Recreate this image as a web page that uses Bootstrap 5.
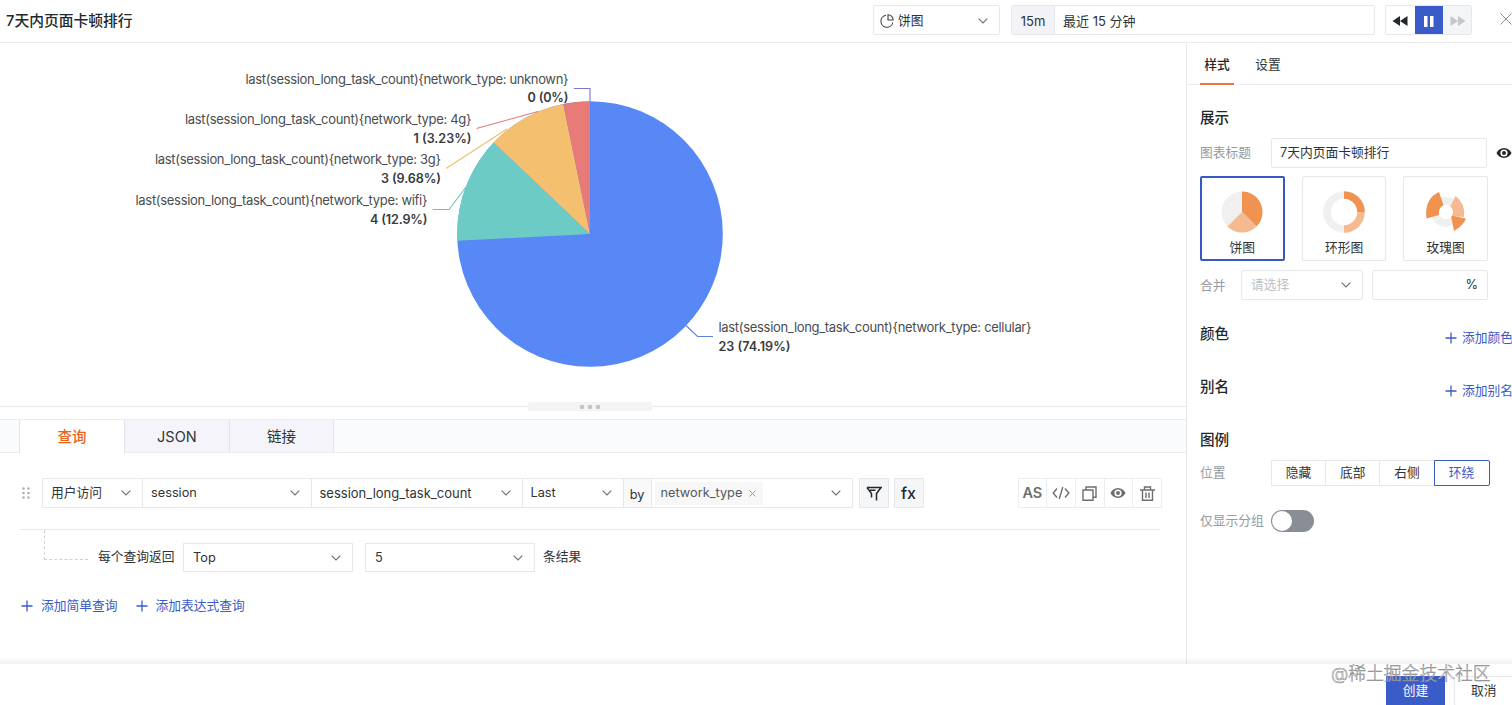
<!DOCTYPE html>
<html lang="zh-CN">
<head>
<meta charset="utf-8">
<meta name="viewport" content="width=device-width, initial-scale=1">
<title>7天内页面卡顿排行</title>
<link href="https://cdn.jsdelivr.net/npm/bootstrap@5.3.0/dist/css/bootstrap.min.css" rel="stylesheet">
<style>
:root{--line:#e6e8eb;--blue:#3a5ac8;--ink:#2f3437;--muted:#969b9f}
body{font-family:Inter,"Noto Sans CJK SC",sans-serif;font-size:12.75px;line-height:18px;color:var(--ink);height:705px;overflow:hidden;background:#fff}
svg{display:block;flex:none}
.topbar{height:43px;border-bottom:1px solid #ebebed;flex:none}
.page-title{font-size:14.75px;margin:12px 0 0 6px;width:868px;flex:none;color:#24292c}
.page-title,.sec-title,.side-tabs .on,.tab-item.on{font-weight:500}
.box{border:1px solid var(--line);background:#fff;display:flex;align-items:center;flex:none;border-radius:2px}
.sel{justify-content:space-between;height:30px;padding:0 11px 0 9px}
.topbar .box{padding-top:1px}
.chev{width:10px;height:6px;fill:none;stroke:#6d7275;stroke-width:1.2}
.range-tag{width:43px;height:28px;margin-top:-1px;padding-top:1px;background:#f2f2f7;border-right:1px solid var(--line);font-size:13px}
.topbar .player{width:87px;height:30px;overflow:hidden;padding-top:0}
.player>span{width:28.7px;height:30px;padding-top:1px;display:flex;align-items:center;justify-content:center;flex:none}
.workspace{height:621px;flex:none}
.left-pane{width:1186px;flex:none}
.chart{height:359px}
.chart text{font-size:13px;fill:#4a4d50}
.chart .val{font-weight:600;font-size:12.6px;fill:#383b3e}
.splitter{height:9px;background:linear-gradient(#e6e7e8,#e6e7e8) 0 4px/100% 1px no-repeat}
.grip{width:124px;height:9px;margin-left:528px;background:#f4f4f5;border-radius:2px;gap:4px}
.grip i{width:4px;height:4px;background:#c3c4c5;border-radius:1px}
.tabs-strip{height:34px;margin-top:8px;background:#fafbfd;border:solid #ecedf2;border-width:1px 0;padding-left:19px}
.tab-item{width:104.7px;border-right:1px solid #e3e4ea;background:#f4f4fa;display:flex;align-items:center;justify-content:center;font-size:14.5px;padding-top:1px}
.tab-item.on{background:#fff;color:#e8641b;border-left:1px solid #e3e4ea;width:106px;margin-bottom:-1px}
.query-row{margin:25px 0 0 21px;height:30px}
.query-row .box{height:30px;border-radius:0;margin-right:-1px}
.query-row .sel{padding-left:8px}
.chip{background:#f7f7f8;height:23px;padding:0 7px 0 6px;gap:7px;color:#55595c;font-size:12.75px}
.by{background:#f8f9fa;width:29px;justify-content:center;padding-top:3px}
.query-row .sq{width:30px;background:#f4f6f8;justify-content:center;color:#22282c}
.query-row .act{width:29.7px;justify-content:center;color:#6c6e70;border-color:#ecedef;border-radius:0}
.rule{width:1140px;height:1px;background:#e6e8ea;margin:21px 0 0 20px}
.limit-row{margin-left:44px;height:42px;align-items:flex-end}
.limit-row .box{border-radius:0;height:29px}
.elbow{width:44px;height:30px;border:dashed #cfd1d3;border-width:0 0 1px 1px;margin-right:10px;align-self:flex-start}
.links{color:var(--blue);margin:25px 0 0 21px}
.links span{margin-right:18px;gap:8px}
.plus{width:12px;height:12px;stroke:var(--blue);stroke-width:1.3;fill:none}
.side{border-left:1px solid #e7e9eb;width:326px;flex:none;overflow:hidden}
.side-tabs{height:42px;border-bottom:1px solid #ececee;padding-left:13px;gap:17px}
.side-tabs span{width:34px;display:flex;align-items:center;justify-content:center;height:42px;padding-top:2px}
.side-tabs .on{border-bottom:2px solid #ea7440;color:#23282b;padding-top:4px}
.side-body{padding-left:13px;width:340px}
.sec-title{font-size:14.6px;color:#23282b;line-height:20px}
.lbl{color:var(--muted);flex:none}
.opt{width:84.7px;height:85px;flex-direction:column;padding-top:14px}
.opt.on{border:2px solid #3558c4;padding-top:13px}
.opt span{margin-top:7px;line-height:16px}
.seg .box{width:55.2px;height:26px;margin-right:-1px;justify-content:center;border-radius:0}
.seg .box.on{border-color:var(--blue);color:var(--blue);width:56px;border-radius:0 2px 2px 0;z-index:1}
.switch{width:43px;height:22px;border-radius:11px;background:#888d96;padding:1px}
.switch i{width:20px;height:20px;border-radius:50%;background:#fff;display:block}
.shade{height:6px;flex:none;margin-top:-6px;background:linear-gradient(#00000003,#0000000d)}
.bottom{height:41px;flex:none;padding:12px 0 0 1386px;position:relative}
.bottom .ok{width:59px;height:30px;background:#3a5cc9;color:#fff;flex:none;margin-right:9px}
.bottom .box{width:62px;height:30px;padding-left:16px}
.stamp{position:absolute;left:1331px;top:-1px;font-size:17.8px;font-weight:300;line-height:22px;color:#ffffffd0;-webkit-text-stroke:.5px #7f8387;white-space:nowrap}
</style>
</head>
<body class="d-flex flex-column">
<svg width="0" height="0" class="position-absolute"><defs>
<symbol id="chev" viewBox="0 0 10 6"><path d="M.7.7 5 5 9.3.7"/></symbol>
<symbol id="plus" viewBox="0 0 12 12"><path d="M6 .5v11M.5 6h11"/></symbol>
<symbol id="eye" viewBox="0 0 16 12"><path fill-rule="evenodd" d="M8 1C4.500 1 1.800 3.200.500 6 1.800 8.800 4.500 11 8 11s6.200-2.200 7.500-5C14.200 3.200 11.500 1 8 1Zm0 1.400a3.600 3.600 0 1 1 0 7.200 3.600 3.600 0 0 1 0-7.200ZM8 4a2 2 0 1 0 0 4 2 2 0 0 0 0-4Z"/></symbol>
</defs></svg>

<header class="topbar d-flex align-items-start">
  <div class="page-title">7天内页面卡顿排行</div>
  <div class="box sel" style="width:127px;margin:5px 10px 0 -1px;padding-left:6px">
    <span class="d-flex align-items-center" style="gap:4px"><svg width="14" height="14" viewBox="0 0 14 14" fill="none" stroke="#3b4043" stroke-width="1.1"><path d="M6 1.300a6 6 0 1 0 6.800 7.200M8 .8v5.200h5.200A5.200 5.200 0 0 0 8 .8Z"/></svg>饼图</span>
    <svg class="chev"><use href="#chev"/></svg>
  </div>
  <div class="box" style="width:364px;height:30px;margin:5px 0 0 1px">
    <span class="range-tag d-flex align-items-center justify-content-center">15m</span><span class="ms-2" style="font-size:13px">最近 15 分钟</span>
  </div>
  <div class="box player" style="margin:5px 0 0 10px">
    <span><svg width="16" height="10" fill="#22282d"><path d="M8 0v10L.5 5zM15.500 0v10L8 5z"/></svg></span>
    <span style="background:#3a5cc9"><svg width="10" height="12" fill="#fff"><path d="M0 1h3.500v11H0zM6 1h3.500v11H6z"/></svg></span>
    <span style="background:#f4f5f6"><svg width="16" height="10" fill="#c4c6c8"><path d="M.5 0v10L8 5zM8 0v10l7.500-5z"/></svg></span>
  </div>
  <svg width="12" height="12" style="margin:13px 0 0 28px" stroke="#8c9093" fill="none"><path d="m.5.500 11 11m0-11-11 11"/></svg>
</header>

<main class="workspace d-flex">
  <section class="left-pane">
    <svg class="chart" width="1186" height="359" viewBox="0 43 1186 359">
      <circle cx="590" cy="234" r="132.800" fill="#5788f6"/>
      <path fill="#6dcbc6" d="M590 234 457.400 240.700A132.800 132.800 0 0 1 493.700 142.500Z"/>
      <path fill="#f4c06f" d="M590 234 493.700 142.500A132.800 132.800 0 0 1 563.300 103.900Z"/>
      <path fill="#e87b78" d="M590 234 563.300 103.900A132.800 132.800 0 0 1 590 101.200Z"/>
      <g fill="none" stroke-width="1.100">
        <path stroke="#7d78c9" d="M574 88.500h16v12.700"/>
        <path stroke="#e0797c" d="M476.500 128.500 538 111.500"/>
        <path stroke="#f2bb6e" d="M446 168.500 507 129"/>
        <path stroke="#68c5bd" d="M432.500 209.500h16.500L466 187"/>
        <path stroke="#5b82dd" d="m686 325.500 11.500 11h15.500"/>
      </g>
      <g text-anchor="end">
        <text x="568.500" y="83.500" textLength="323">last(session_long_task_count){network_type: unknown}</text><text class="val" x="568.500" y="102.300" textLength="41">0 (0%)</text>
        <text x="471.500" y="123.600" textLength="286.500">last(session_long_task_count){network_type: 4g}</text><text class="val" x="471.500" y="142.700" textLength="58">1 (3.23%)</text>
        <text x="441" y="164.300" textLength="286">last(session_long_task_count){network_type: 3g}</text><text class="val" x="441" y="183.300" textLength="60">3 (9.68%)</text>
        <text x="427.500" y="204.600" textLength="292">last(session_long_task_count){network_type: wifi}</text><text class="val" x="427.500" y="223.600" textLength="57.500">4 (12.9%)</text>
      </g>
      <text x="718.500" y="331.500" textLength="313">last(session_long_task_count){network_type: cellular}</text><text class="val" x="718.500" y="350.500" textLength="72">23 (74.19%)</text>
    </svg>
    <div class="splitter"><div class="grip d-flex align-items-center justify-content-center"><i></i><i></i><i></i></div></div>
    <nav class="tabs-strip d-flex"><div class="tab-item on">查询</div><div class="tab-item">JSON</div><div class="tab-item">链接</div></nav>

    <div class="query-row d-flex align-items-center">
      <svg width="10" height="13" fill="#aeb1b3" style="margin-right:11px"><circle cx="2.500" cy="1.500" r="1.300"/><circle cx="7.500" cy="1.500" r="1.300"/><circle cx="2.500" cy="6" r="1.300"/><circle cx="7.500" cy="6" r="1.300"/><circle cx="2.500" cy="10.500" r="1.300"/><circle cx="7.500" cy="10.500" r="1.300"/></svg>
      <div class="box sel" style="width:101px">用户访问<svg class="chev"><use href="#chev"/></svg></div>
      <div class="box sel" style="width:169.500px">session<svg class="chev"><use href="#chev"/></svg></div>
      <div class="box sel" style="width:212px"><span style="font-size:13px">session_long_task_count</span><svg class="chev"><use href="#chev"/></svg></div>
      <div class="box sel" style="width:102px">Last<svg class="chev"><use href="#chev"/></svg></div>
      <div class="box by">by</div>
      <div class="box sel" style="width:202px;padding-left:3px"><span class="chip d-flex align-items-center">network_type<svg width="7" height="7" stroke="#999c9f" fill="none"><path d="m.5.500 6 6m0-6-6 6"/></svg></span><svg class="chev"><use href="#chev"/></svg></div>
      <div class="box sq" style="margin:0 5px 0 7px"><svg width="16" height="15" fill="none" stroke="currentColor" stroke-width="1.500"><path d="M1 1.500h14L10.500 7.500v7M1 1.500 5.500 7.500v4M4 4.300h5.500"/></svg></div>
      <div class="box sq" style="font-size:16px;font-weight:500">fx</div>
      <div class="d-flex" style="margin-left:95px">
        <div class="box act" style="font-size:14.500px;font-weight:600">AS</div>
        <div class="box act"><svg width="18" height="14" fill="none" stroke="currentColor" stroke-width="1.400"><path d="M5 2.500 1.200 7 5 11.500M13 2.500 16.800 7 13 11.500M10.800 1 7.200 13"/></svg></div>
        <div class="box act"><svg width="15" height="15" fill="none" stroke="currentColor" stroke-width="1.400"><path d="M1 4h10v10.300H1zM4 4V1h10v10.300h-3"/></svg></div>
        <div class="box act"><svg width="16" height="12" fill="currentColor"><use href="#eye"/></svg></div>
        <div class="box act"><svg width="15" height="15" fill="none" stroke="currentColor" stroke-width="1.400"><path d="M0 4h15M4.500 4V1h6v3M2.500 4v10.300h10V4M6 6.500v5.500M9 6.500v5.500"/></svg></div>
      </div>
    </div>
    <div class="rule"></div>
    <div class="limit-row d-flex">
      <div class="elbow"></div><span style="width:85px;margin-bottom:6px">每个查询返回</span>
      <div class="box sel" style="width:170px;margin-right:12px">Top<svg class="chev"><use href="#chev"/></svg></div>
      <div class="box sel" style="width:170px;margin-right:8px">5<svg class="chev"><use href="#chev"/></svg></div>
      <span style="margin-bottom:6px">条结果</span>
    </div>
    <div class="links d-flex"><span class="d-flex align-items-center"><svg class="plus"><use href="#plus"/></svg>添加简单查询</span><span class="d-flex align-items-center"><svg class="plus"><use href="#plus"/></svg>添加表达式查询</span></div>
  </section>

  <aside class="side">
    <div class="side-tabs d-flex"><span class="on">样式</span><span>设置</span></div>
    <div class="side-body">
      <div class="sec-title" style="padding-top:23px">展示</div>
      <div class="d-flex align-items-center" style="margin-top:10px"><span class="lbl" style="width:71px">图表标题</span><div class="box" style="width:216px;height:30px;padding-left:8px">7天内页面卡顿排行</div><svg width="16" height="12" style="margin-left:9px" fill="#23282b"><use href="#eye"/></svg></div>
      <div class="d-flex" style="gap:17px;margin-top:8px">
        <div class="box opt on"><svg width="42" height="42" viewBox="-21 -21 42 42"><circle r="20.500" fill="#f0f0f0"/><path fill="#f09250" d="M0 0V-20.500A20.500 20.500 0 0 1 14.500 14.500Z"/><path fill="#f5ba90" d="M0 0 14.500 14.500A20.500 20.500 0 0 1-14.500 14.500Z"/></svg><span>饼图</span></div>
        <div class="box opt"><svg width="42" height="42" viewBox="-21 -21 42 42" fill="none" stroke-width="7.500"><circle r="17" stroke="#f0f0f0"/><path stroke="#f09250" d="M0-17A17 17 0 0 1 17 0"/><path stroke="#f5ba90" d="M17 0A17 17 0 0 1 0 17"/></svg><span>环形图</span></div>
        <div class="box opt"><svg width="42" height="42" viewBox="-21 -21 42 42"><circle r="11" stroke="#f0f0f0" stroke-width="8" fill="none"/><path fill="#f09250" d="M-7-20-2.500-7Q-7-4-7 3L-19.500 6.500Q-22-13-7-20Z"/><path fill="#f5ba90" d="M9.500-16 4-5Q7-2 6 4L18 5Q20-8 9.500-16Z"/><path fill="#f09250" d="M5 3.500 20 6.500Q17 14 8 19Z"/><circle r="7" fill="#fff"/></svg><span>玫瑰图</span></div>
      </div>
      <div class="d-flex align-items-center" style="margin-top:9px"><span class="lbl" style="width:41px;padding-top:2px">合并</span><div class="box sel" style="width:122px;color:#bcc0c3;margin-right:9px">请选择<svg class="chev"><use href="#chev"/></svg></div><div class="box justify-content-end" style="width:116px;height:30px;padding-right:9px">%</div></div>
      <div class="d-flex align-items-start" style="margin-top:24px;height:53px"><span class="sec-title" style="width:245px">颜色</span><span class="d-flex align-items-center flex-shrink-0" style="gap:5px;color:#3a5ac8;margin-top:5px"><svg class="plus"><use href="#plus"/></svg>添加颜色</span></div>
      <div class="d-flex align-items-start" style="height:53px"><span class="sec-title" style="width:245px">别名</span><span class="d-flex align-items-center flex-shrink-0" style="gap:5px;color:#3a5ac8;margin-top:5px"><svg class="plus"><use href="#plus"/></svg>添加别名</span></div>
      <div class="sec-title">图例</div>
      <div class="seg d-flex align-items-center" style="margin-top:10px"><span class="lbl" style="width:71px">位置</span><div class="box">隐藏</div><div class="box">底部</div><div class="box">右侧</div><div class="box on">环绕</div></div>
      <div class="d-flex align-items-center" style="margin-top:24px"><span class="lbl" style="width:71px;white-space:nowrap">仅显示分组</span><div class="switch"><i></i></div></div>
    </div>
  </aside>
</main>
<div class="shade"></div>
<footer class="bottom d-flex"><div class="ok d-flex align-items-center justify-content-center">创建</div><div class="box">取消</div><div class="stamp">@稀土掘金技术社区</div></footer>
<script src="https://cdn.jsdelivr.net/npm/bootstrap@5.3.0/dist/js/bootstrap.bundle.min.js"></script>
</body>
</html>
